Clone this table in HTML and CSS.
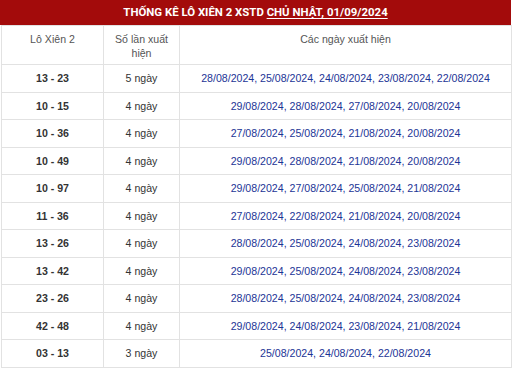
FILE: index.html
```html
<!DOCTYPE html>
<html lang="vi">
<head>
<meta charset="utf-8">
<link rel="stylesheet" href="styles.css">
</head>
<body>
<div class="box">
  <div class="title">THỐNG KÊ LÔ XIÊN 2 XSTD <u>CHỦ NHẬT, 01/09/2024</u></div>
  <table class="stats">
    <colgroup><col class="c1"><col class="c2"><col class="c3"></colgroup>
    <thead>
      <tr><th>Lô Xiên 2</th><th>Số lần xuất hiện</th><th>Các ngày xuất hiện</th></tr>
    </thead>
    <tbody>
      <tr><td class="pair">13 - 23</td><td class="cnt">5 ngày</td><td class="dates">28/08/2024, 25/08/2024, 24/08/2024, 23/08/2024, 22/08/2024</td></tr>
      <tr><td class="pair">10 - 15</td><td class="cnt">4 ngày</td><td class="dates">29/08/2024, 28/08/2024, 27/08/2024, 20/08/2024</td></tr>
      <tr><td class="pair">10 - 36</td><td class="cnt">4 ngày</td><td class="dates">27/08/2024, 25/08/2024, 21/08/2024, 20/08/2024</td></tr>
      <tr><td class="pair">10 - 49</td><td class="cnt">4 ngày</td><td class="dates">29/08/2024, 28/08/2024, 21/08/2024, 20/08/2024</td></tr>
      <tr><td class="pair">10 - 97</td><td class="cnt">4 ngày</td><td class="dates">29/08/2024, 27/08/2024, 25/08/2024, 21/08/2024</td></tr>
      <tr><td class="pair">11 - 36</td><td class="cnt">4 ngày</td><td class="dates">27/08/2024, 22/08/2024, 21/08/2024, 20/08/2024</td></tr>
      <tr><td class="pair">13 - 26</td><td class="cnt">4 ngày</td><td class="dates">28/08/2024, 25/08/2024, 24/08/2024, 23/08/2024</td></tr>
      <tr><td class="pair">13 - 42</td><td class="cnt">4 ngày</td><td class="dates">29/08/2024, 25/08/2024, 24/08/2024, 23/08/2024</td></tr>
      <tr><td class="pair">23 - 26</td><td class="cnt">4 ngày</td><td class="dates">28/08/2024, 25/08/2024, 24/08/2024, 23/08/2024</td></tr>
      <tr><td class="pair">42 - 48</td><td class="cnt">4 ngày</td><td class="dates">29/08/2024, 24/08/2024, 23/08/2024, 21/08/2024</td></tr>
      <tr><td class="pair">03 - 13</td><td class="cnt">3 ngày</td><td class="dates">25/08/2024, 24/08/2024, 22/08/2024</td></tr>
    </tbody>
  </table>
</div>
</body>
</html>
```
FILE: styles.css
```css
html, body {
  margin: 0;
  padding: 0;
  background: #fff;
}
.box {
  width: 511px;
  font-family: "Liberation Sans", Arial, sans-serif;
}
.title {
  background: #a30b0b;
  color: #fff;
  font-family: Roboto, "Liberation Sans", sans-serif;
  font-weight: bold;
  font-size: 11.4px;
  height: 25px;
  line-height: 25px;
  text-align: center;
}
.title u {
  text-decoration-thickness: 1px;
  text-underline-offset: 2px;
}
.stats {
  width: 510px;
  margin-left: 1px;
  border-collapse: collapse;
  table-layout: fixed;
}
.c1 { width: 102px; }
.c2 { width: 76px; }
.c3 { width: 332px; }
.stats th, .stats td {
  border: 1px solid #e2e2e2;
  text-align: center;
  padding: 0;
}
.stats th {
  height: 32px;
  vertical-align: top;
  padding: 6px 10px 0;
  font-weight: normal;
  font-size: 10.6px;
  line-height: 14px;
  color: #555;
}
.stats td {
  height: 26.5px;
  font-size: 10.6px;
  line-height: 14px;
  vertical-align: middle;
}
.pair {
  font-weight: bold;
  font-size: 11px;
  color: #333;
}
.cnt {
  color: #333;
}
.dates {
  color: #1c3596;
}
```
